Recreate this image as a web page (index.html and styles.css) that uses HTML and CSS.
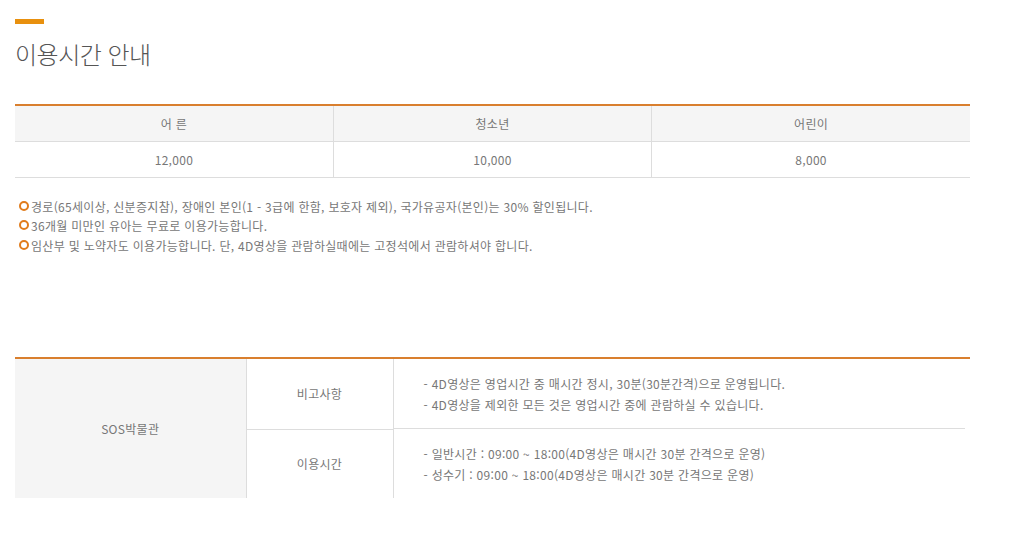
FILE: index.html
```html
<!DOCTYPE html>
<html lang="ko">
<head>
<meta charset="utf-8">
<link rel="stylesheet" href="styles.css">
</head>
<body>
<div class="page">
  <div class="title-mark"></div>
  <h2 class="title">이용시간 안내</h2>

  <table class="price">
    <thead>
      <tr><th>어 른</th><th>청소년</th><th>어린이</th></tr>
    </thead>
    <tbody>
      <tr><td>12,000</td><td>10,000</td><td>8,000</td></tr>
    </tbody>
  </table>

  <ul class="notes">
    <li>경로(65세이상, 신분증지참), 장애인 본인(1 - 3급에 한함, 보호자 제외), 국가유공자(본인)는 30% 할인됩니다.</li>
    <li>36개월 미만인 유아는 무료로 이용가능합니다.</li>
    <li>임산부 및 노약자도 이용가능합니다. 단, 4D영상을 관람하실때에는 고정석에서 관람하셔야 합니다.</li>
  </ul>

  <table class="hours">
    <tbody>
      <tr>
        <th class="place" rowspan="2">SOS박물관</th>
        <td class="label">비고사항</td>
        <td class="desc">
          <p>- 4D영상은 영업시간 중 매시간 정시, 30분(30분간격)으로 운영됩니다.</p>
          <p>- 4D영상을 제외한 모든 것은 영업시간 중에 관람하실 수 있습니다.</p>
        </td>
      </tr>
      <tr>
        <td class="label">이용시간</td>
        <td class="desc">
          <p>- 일반시간 : 09:00 ~ 18:00(4D영상은 매시간 30분 간격으로 운영)</p>
          <p>- 성수기 : 09:00 ~ 18:00(4D영상은 매시간 30분 간격으로 운영)</p>
        </td>
      </tr>
    </tbody>
  </table>
</div>
</body>
</html>
```

FILE: styles.css
```css
* { box-sizing: border-box; }
html, body { margin: 0; padding: 0; background: #fff; }
body {
  font-family: "Noto Sans CJK KR", "Noto Sans", sans-serif;
  color: #777;
  font-size: 12px;
}
.page {
  padding: 19px 44px 0 15px;
  width: 1014px;
}
.title-mark {
  width: 29px;
  height: 5px;
  background: #e8900e;
}
.title {
  margin: 14px 0 0;
  font-size: 24px;
  font-weight: 300;
  color: #555;
  line-height: 32px;
  letter-spacing: -0.5px;
}
.price {
  margin-top: 34px;
  width: 955px;
  border-collapse: collapse;
  border-top: 2px solid #d97f2e;
  table-layout: fixed;
}
.price th, .price td {
  font-weight: 400;
  font-size: 12px;
  color: #777;
  text-align: center;
  border-bottom: 1px solid #ddd;
  border-left: 1px solid #ddd;
  height: 36px;
  padding: 0;
  letter-spacing: 0.3px;
}
.price th:first-child, .price td:first-child { border-left: 0; }
.price th { background: #f5f5f5; height: 36px; }
.notes {
  list-style: none;
  margin: 19px 0 0;
  padding: 0;
}
.notes li {
  position: relative;
  padding-left: 16px;
  line-height: 19.5px;
  color: #777;
  font-size: 12px;
  letter-spacing: 0.3px;
}
.notes li::before {
  content: "";
  position: absolute;
  left: 4px;
  top: 4px;
  width: 6px;
  height: 6px;
  border: 2px solid #e07b1b;
  border-radius: 50%;
}
.hours {
  margin-top: 102px;
  width: 955px;
  border-collapse: collapse;
  border-top: 2px solid #d97f2e;
  table-layout: fixed;
}
.hours th, .hours td {
  font-weight: 400;
  font-size: 12px;
  color: #777;
  padding: 0;
  letter-spacing: 0.3px;
}
.place {
  width: 231px;
  background: #f5f5f5;
  text-align: center;
}
.label {
  width: 147px;
  text-align: center;
  border-left: 1px solid #ddd;
  border-right: 1px solid #ddd;
  height: 71px;
}
.hours tr:first-child .label { border-bottom: 1px solid #ddd; }
.hours tr:first-child .desc {
  background: linear-gradient(#ddd, #ddd) left bottom / calc(100% - 5px) 1px no-repeat;
}
.hours tr:last-child .label { height: 69px; }
.desc { padding-left: 30px !important; }
.desc p { margin: 0; line-height: 21px; }
```
